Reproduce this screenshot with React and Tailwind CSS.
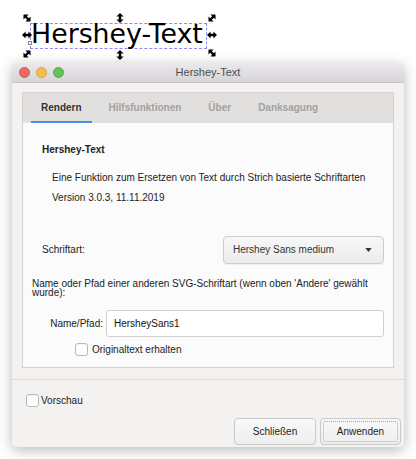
import React from "react";

const font = { fontFamily: '"Liberation Sans", Arial, sans-serif' };

const DoubleArrow = ({ className }) => (
  <svg
    viewBox="0 0 10 10"
    className={`absolute w-[10px] h-[10px] ${className}`}
  >
    <path
      d="M0 5 L3.6 1.4 L3.6 3.8 L6.4 3.8 L6.4 1.4 L10 5 L6.4 8.6 L6.4 6.2 L3.6 6.2 L3.6 8.6 Z"
      fill="#000"
    />
  </svg>
);

const Checkbox = () => (
  <span className="inline-block w-[13px] h-[13px] rounded-[3px] border border-[#b9b9b9] bg-white shadow-[inset_0_1px_0_rgba(0,0,0,0.04)]" />
);

const App = () => {
  return (
    <div
      className="w-[416px] h-[459px] bg-white overflow-hidden text-[#222]"
      style={font}
    >
      {/* Canvas selection */}
      <div className="relative h-[63px] pt-[23px] pl-[30px]">
        <div className="w-[177px] h-[26px] border border-dashed border-[#8a8aef]">
          <span
            className="block -mt-[3px] text-[26.8px] leading-[26px] text-black"
            style={{ fontFamily: '"DejaVu Sans", Verdana, sans-serif' }}
          >
            Hershey-Text
          </span>
        </div>
        <DoubleArrow className="left-[22px] top-[13px] rotate-45" />
        <DoubleArrow className="left-[115px] top-[13px] rotate-90" />
        <DoubleArrow className="left-[207px] top-[13px] -rotate-45" />
        <DoubleArrow className="left-[22px] top-[30px]" />
        <DoubleArrow className="left-[207px] top-[30px]" />
        <DoubleArrow className="left-[22px] top-[49px] -rotate-45" />
        <DoubleArrow className="left-[115px] top-[50px] rotate-90" />
        <DoubleArrow className="left-[207px] top-[48px] rotate-45" />
        <span className="absolute left-[28px] top-[41px] w-[4px] h-[4px] border border-[#888] bg-white" />
      </div>

      {/* Dialog window */}
      <div className="ml-[12px] w-[392px] rounded-[5px] overflow-hidden bg-[#f3f2f1] shadow-[0_3px_14px_rgba(0,0,0,0.28)]">
        {/* Title bar */}
        <div className="relative h-[20px] flex items-center justify-center bg-gradient-to-b from-[#ebe9eb] to-[#d6d4d6] border-b border-[#c6c4c6]">
          <div className="absolute left-[7px] top-[4px] flex gap-[6px]">
            <span className="w-[11px] h-[11px] rounded-full bg-[#ee6a5f] border border-[#d8564b]" />
            <span className="w-[11px] h-[11px] rounded-full bg-[#f5bf4f] border border-[#d9a33d]" />
            <span className="w-[11px] h-[11px] rounded-full bg-[#61c554] border border-[#4eac42]" />
          </div>
          <span className="text-[11px] text-[#4d4d4d]">Hershey-Text</span>
        </div>

        {/* Body */}
        <div className="pt-[9px] px-[10px]">
          <div className="border border-[#d4d2d0]">
            {/* Tabs */}
            <div className="h-[30px] bg-[#e2e0de] flex items-end pl-[8px] gap-[7px] text-[10px] font-bold">
              <div className="h-full px-[10px] flex items-center border-b-2 border-[#4a8fe6] text-[#333] pt-[1px]">
                Rendern
              </div>
              <div className="h-full px-[10px] flex items-center text-[#a2a0a0] pb-[1px]">
                Hilfsfunktionen
              </div>
              <div className="h-full px-[10px] flex items-center text-[#a2a0a0] pb-[1px]">
                Über
              </div>
              <div className="h-full px-[10px] flex items-center text-[#a2a0a0] pb-[1px]">
                Danksagung
              </div>
            </div>

            {/* Content */}
            <div className="h-[244px] bg-[#fbfbfb] text-[10px] leading-[12px] text-[#222] flex flex-col">
              <div className="pl-[19px] pt-[21px] font-bold">Hershey-Text</div>
              <div className="pl-[29px] mt-[16px]">
                Eine Funktion zum Ersetzen von Text durch Strich basierte Schriftarten
              </div>
              <div className="pl-[29px] mt-[8px]">Version 3.0.3, 11.11.2019</div>

              <div className="mt-[32px] flex items-center justify-between pl-[19px] pr-[9px]">
                <span>Schriftart:</span>
                <div className="w-[161px] h-[28px] rounded-[4px] border border-[#cfcdcc] bg-gradient-to-b from-[#f7f7f7] to-[#ececec] shadow-[0_1px_1px_rgba(0,0,0,0.06)] flex items-center justify-between pl-[9px] pr-[11px]">
                  <span className="text-[#333]">Hershey Sans medium</span>
                  <svg viewBox="0 0 8 5" className="w-[7px] h-[4px]">
                    <path d="M0 0 L8 0 L4 5 Z" fill="#333" />
                  </svg>
                </div>
              </div>

              <div className="mt-[15px] pl-[9px] pr-[20px] leading-[9px]">
                Name oder Pfad einer anderen SVG-Schriftart (wenn oben 'Andere' gewählt wurde):
              </div>

              <div className="mt-[13px] flex items-center pr-[9px]">
                <span className="w-[83px] text-right pr-[3px]">Name/Pfad:</span>
                <div className="flex-1 h-[27px] rounded-[3px] border border-[#d2d0cf] bg-white flex items-center pl-[7px] text-[#111]">
                  HersheySans1
                </div>
              </div>

              <div className="mt-[6px] pl-[52px] flex items-center gap-[4px]">
                <Checkbox />
                <span>Originaltext erhalten</span>
              </div>
            </div>
          </div>
        </div>

        {/* Separator */}
        <div className="mt-[11px] border-t border-[#dddbda]" />

        {/* Footer */}
        <div className="pl-[14px] pt-[13px] flex items-center gap-[2px] text-[10px] text-[#222]">
          <Checkbox />
          <span>Vorschau</span>
        </div>
        <div className="flex justify-end gap-[4px] pr-[3px] pt-[10px] pb-[2px] text-[10px] text-[#222]">
          <button className="w-[82px] h-[27px] rounded-[4px] border border-[#cbc9c8] bg-gradient-to-b from-[#f8f8f8] to-[#eeeeee]">
            Schließen
          </button>
          <button className="w-[81px] h-[27px] rounded-[4px] border border-[#cbc9c8] bg-gradient-to-b from-[#f8f8f8] to-[#eeeeee] p-[2px]">
            <span className="flex w-full h-full items-center justify-center border border-dotted border-[#a9a9a9] rounded-[2px]">
              Anwenden
            </span>
          </button>
        </div>
      </div>
    </div>
  );
};

export default App;
